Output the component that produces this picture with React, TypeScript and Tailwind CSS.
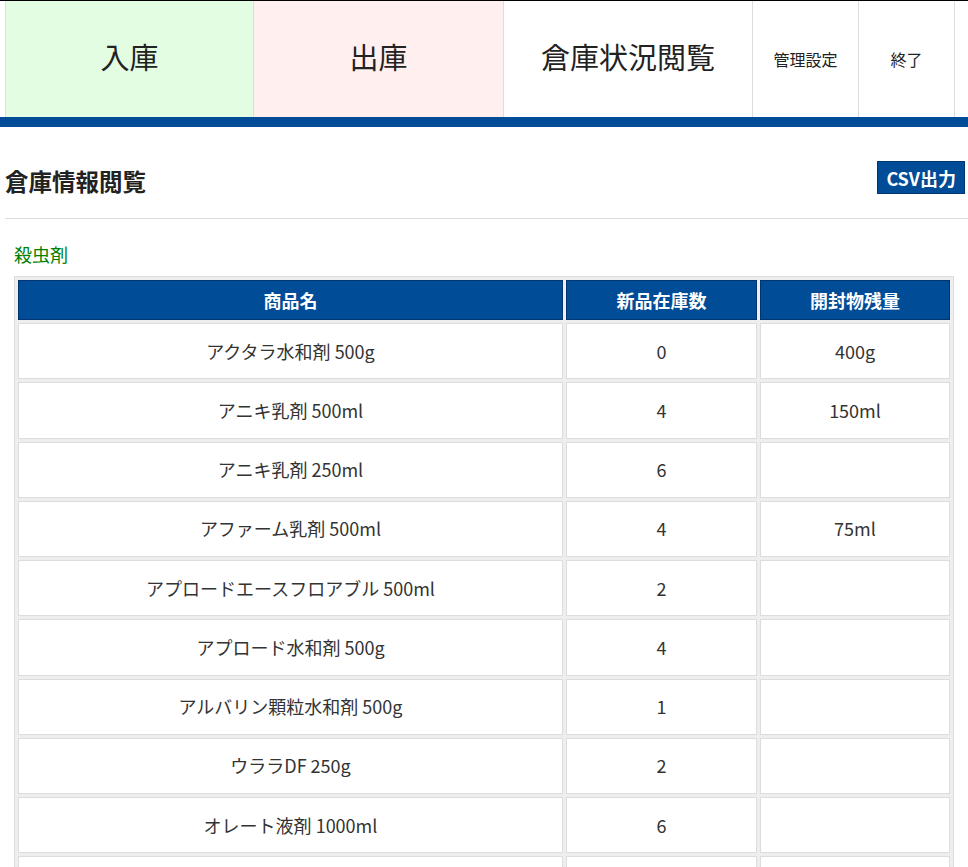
import React from 'react';

interface StockRow {
  name: string;
  stock: string;
  opened: string;
}

const rows: StockRow[] = [
  { name: 'アクタラ水和剤 500g', stock: '0', opened: '400g' },
  { name: 'アニキ乳剤 500ml', stock: '4', opened: '150ml' },
  { name: 'アニキ乳剤 250ml', stock: '6', opened: '' },
  { name: 'アファーム乳剤 500ml', stock: '4', opened: '75ml' },
  { name: 'アプロードエースフロアブル 500ml', stock: '2', opened: '' },
  { name: 'アプロード水和剤 500g', stock: '4', opened: '' },
  { name: 'アルバリン顆粒水和剤 500g', stock: '1', opened: '' },
  { name: 'ウララDF 250g', stock: '2', opened: '' },
  { name: 'オレート液剤 1000ml', stock: '6', opened: '' },
  { name: 'カスケード乳剤 500ml', stock: '3', opened: '' },
  { name: 'コテツフロアブル 500ml', stock: '2', opened: '' },
];

const font = { fontFamily: '"Noto Sans CJK JP", "Liberation Sans", sans-serif' };

export default function App() {
  return (
    <div className="min-h-screen bg-white text-[#333]" style={font}>
      {/* Nav */}
      <div className="border-t border-black">
        <div className="flex h-[116px] pl-[5px]">
          <div className="w-[249px] flex items-center justify-center pb-[5px] border-l border-r border-[#ddd] bg-[#e3fde3] text-[29px] text-[#222]">入庫</div>
          <div className="w-[250px] flex items-center justify-center pb-[5px] border-r border-[#ddd] bg-[#ffefef] text-[29px] text-[#222]">出庫</div>
          <div className="w-[249px] flex items-center justify-center pb-[5px] border-r border-[#ddd] bg-white text-[29px] text-[#222]">倉庫状況閲覧</div>
          <div className="w-[106px] flex items-center justify-center pb-[1px] border-r border-[#ddd] bg-white text-[16px] text-[#222]">管理設定</div>
          <div className="w-[96px] flex items-center justify-center pb-[1px] border-r border-[#ddd] bg-white text-[16px] text-[#222]">終了</div>
        </div>
        <div className="h-[10px] bg-[#004c97]"></div>
      </div>

      {/* Body */}
      <div className="pl-[5px]">
        <div className="mt-[34px] flex items-start justify-between">
          <h1 className="mt-[5px] text-[23.5px] leading-[30px] font-bold text-[#222]">倉庫情報閲覧</h1>
          <button className="mr-[3px] h-[33px] px-[8px] bg-[#004c97] border border-[#003570] text-white font-bold text-[18px] leading-none">CSV出力</button>
        </div>
        <div className="mt-[22px] border-t border-[#ddd]"></div>

        <div className="pl-[9px]">
          <p className="mt-[23px] text-[18px] leading-[24px] text-[#008000]">殺虫剤</p>
          <table className="mt-[10px] w-[940px] table-fixed border-separate border-spacing-[3px] border border-[#ddd] bg-[#eee]">
            <thead>
              <tr>
                <th className="w-[545px] h-[40px] bg-[#004c97] border border-[#003570] text-white font-bold text-[18px]">商品名</th>
                <th className="w-[191px] h-[40px] bg-[#004c97] border border-[#003570] text-white font-bold text-[18px]">新品在庫数</th>
                <th className="w-[190px] h-[40px] bg-[#004c97] border border-[#003570] text-white font-bold text-[18px]">開封物残量</th>
              </tr>
            </thead>
            <tbody>
              {rows.map((r) => (
                <tr key={r.name}>
                  <td className="h-[56.25px] bg-white border border-[#ddd] text-center text-[18px]">{r.name}</td>
                  <td className="h-[56.25px] bg-white border border-[#ddd] text-center text-[18px]">{r.stock}</td>
                  <td className="h-[56.25px] bg-white border border-[#ddd] text-center text-[18px]">{r.opened}</td>
                </tr>
              ))}
            </tbody>
          </table>
        </div>
      </div>
    </div>
  );
}
